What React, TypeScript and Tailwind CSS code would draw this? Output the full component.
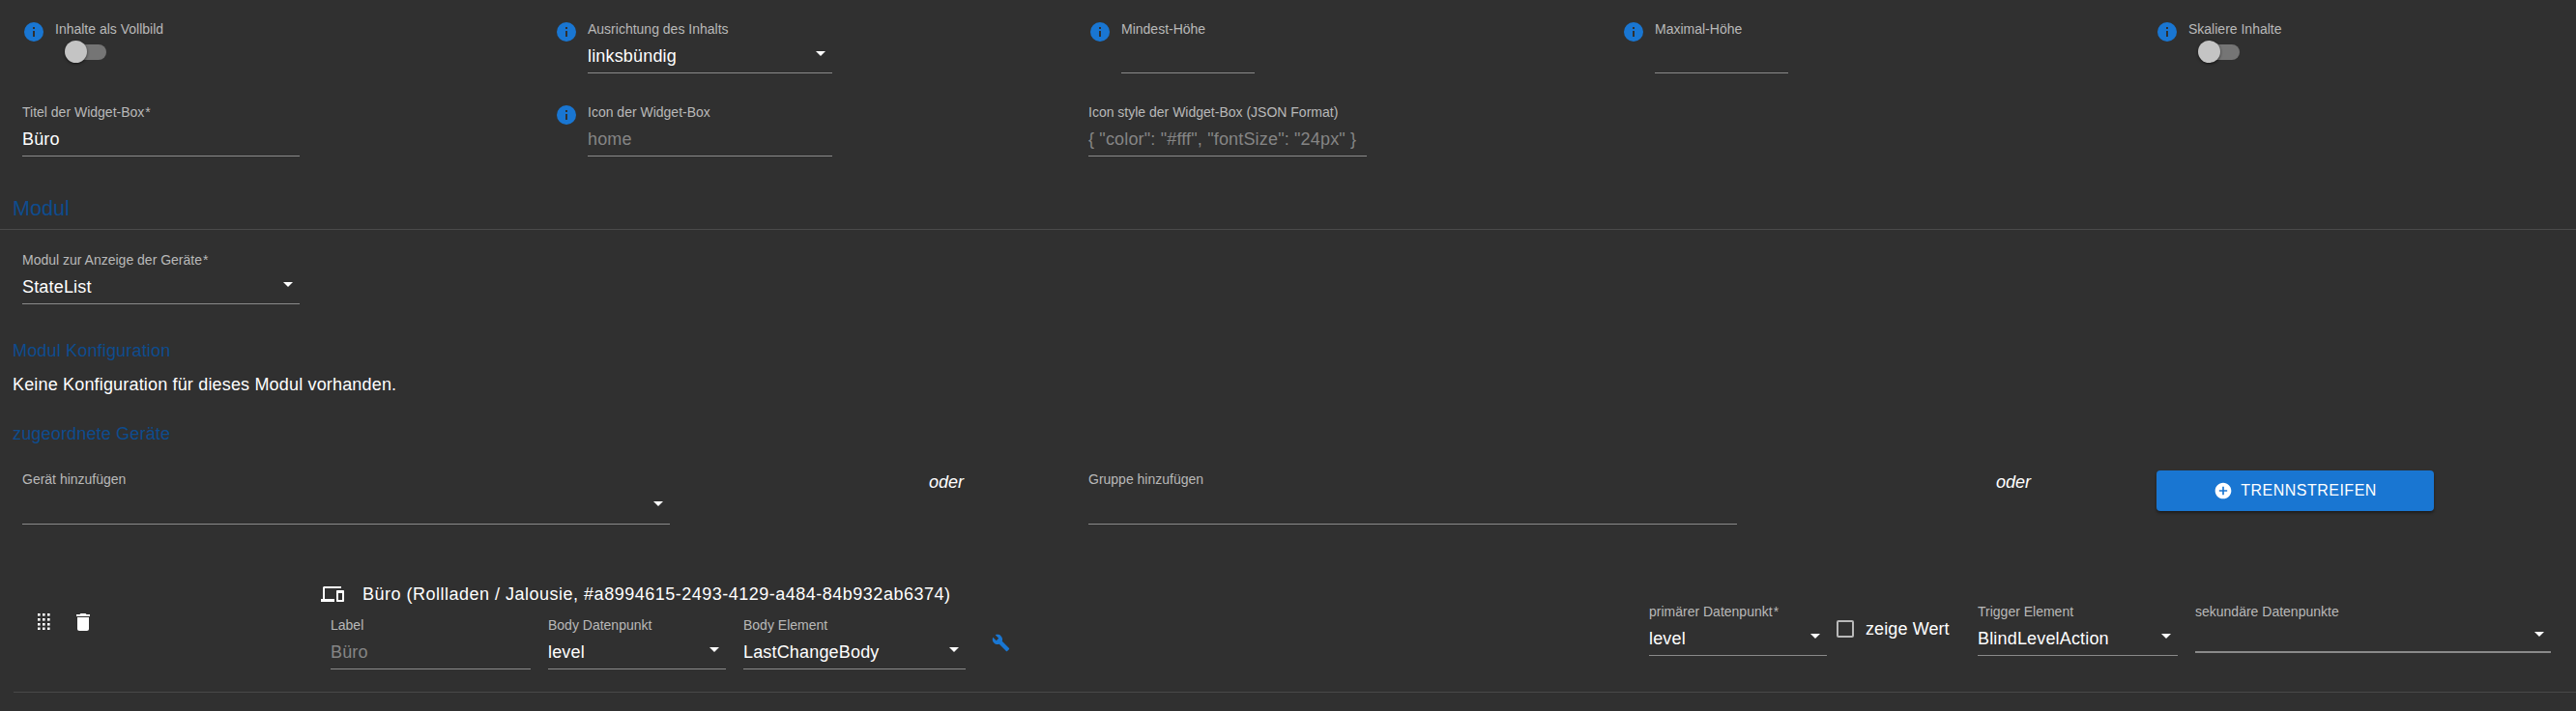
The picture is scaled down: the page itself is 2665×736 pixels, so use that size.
const FONT = "font-['Liberation_Sans',Arial,sans-serif]"

function InfoIcon() {
  return (
    <svg width="20" height="20" viewBox="0 0 20 20" className="shrink-0">
      <circle cx="10" cy="10" r="10" fill="#1976d2" />
      <rect x="9" y="9" width="2" height="6" fill="#303030" />
      <rect x="9" y="5" width="2" height="2" fill="#303030" />
    </svg>
  )
}

function Arrow() {
  return (
    <svg width="10" height="5" viewBox="0 0 10 5" className="absolute right-[7px] top-[7px]">
      <path d="M0 0l5 5 5-5z" fill="#fff" />
    </svg>
  )
}

function Field({ label, value, placeholder, select, req, className = '' }: { label: string; value?: string; placeholder?: string; select?: boolean; req?: boolean; className?: string }) {
  return (
    <div className={`shrink-0 ${className}`}>
      <div className="h-[14px] text-[14px] leading-[14px] text-[#b9b9b9] whitespace-nowrap">
        {label}{req && <span className="ml-[1px]">*</span>}
      </div>
      <div className="relative mt-[9px] h-[24px] text-[18px] leading-[24px] tracking-[0.17px] whitespace-nowrap">
        {value && <span className="text-white">{value}</span>}
        {placeholder && <span className="text-[#858585]">{placeholder}</span>}
        {select && <Arrow />}
      </div>
      <div className="mt-[5px] h-[1px] bg-[#8a8a8a]" />
    </div>
  )
}

function Switch() {
  return (
    <div className="relative mt-[5px] ml-[10px] h-[23px] w-[43px]">
      <div className="absolute left-[8px] top-[4px] h-[16px] w-[35px] rounded-full bg-[#757575]" />
      <div className="absolute left-0 top-0 h-[23px] w-[23px] rounded-full bg-[#c4c4c4] shadow-[0_1px_3px_rgba(0,0,0,0.6)]" />
    </div>
  )
}

function InfoCell({ children }: { children: React.ReactNode }) {
  return (
    <div className="flex gap-[12px]">
      <InfoIcon />
      {children}
    </div>
  )
}

function SwitchField({ label }: { label: string }) {
  return (
    <div>
      <div className="h-[14px] text-[14px] leading-[14px] text-[#b9b9b9] whitespace-nowrap">{label}</div>
      <Switch />
    </div>
  )
}

function Heading({ children, className = '' }: { children: React.ReactNode; className?: string }) {
  return <div className={`pl-[13px] leading-[24px] text-[#0e4c8e] ${className}`}>{children}</div>
}

export default function App() {
  return (
    <div className={`${FONT} h-[736px] w-full overflow-hidden bg-[#303030] pt-[23px] text-white`}>
      {/* Widget-Box */}
      <div className="grid grid-cols-[551px_552px_552px_552px_1fr] pl-[25px]">
        <InfoCell><SwitchField label="Inhalte als Vollbild" /></InfoCell>
        <InfoCell><Field label="Ausrichtung des Inhalts" value="linksbündig" select className="w-[253px]" /></InfoCell>
        <InfoCell><Field label="Mindest-Höhe" className="w-[138px]" /></InfoCell>
        <InfoCell><Field label="Maximal-Höhe" className="w-[138px]" /></InfoCell>
        <InfoCell><SwitchField label="Skaliere Inhalte" /></InfoCell>
      </div>
      <div className="mt-[33px] grid grid-cols-[553px_550px_1fr] pl-[23px]">
        <Field label="Titel der Widget-Box" req value="Büro" className="w-[287px]" />
        <InfoCell><Field label="Icon der Widget-Box" placeholder="home" className="w-[253px]" /></InfoCell>
        <Field label="Icon style der Widget-Box (JSON Format)" placeholder='{ "color": "#fff", "fontSize": "24px" }' className="w-[288px]" />
      </div>

      {/* Modul */}
      <Heading className="mt-[42px] text-[21.6px]">Modul</Heading>
      <div className="mt-[9px] h-[1px] bg-[#4a4a4a]" />
      <div className="mt-[24px] pl-[23px]">
        <Field label="Modul zur Anzeige der Geräte" req value="StateList" select className="w-[287px]" />
      </div>
      <Heading className="mt-[36px] text-[18px] tracking-[0.17px]">Modul Konfiguration</Heading>
      <div className="mt-[11px] pl-[13px] text-[18px] leading-[24px] tracking-[0.17px]">Keine Konfiguration für dieses Modul vorhanden.</div>
      <Heading className="mt-[27px] text-[18px] tracking-[0.17px]">zugeordnete Geräte</Heading>

      {/* Geräte hinzufügen */}
      <div className="mt-[28px] flex pl-[23px]">
        <Field label="Gerät hinzufügen" select className="w-[670px] [&>div:nth-child(3)]:mt-[6px]" />
        <div className="ml-[268px] mt-[1px] w-[165px] text-[18px] italic leading-[18px]">oder</div>
        <Field label="Gruppe hinzufügen" className="w-[671px] [&>div:nth-child(3)]:mt-[6px]" />
        <div className="ml-[268px] mt-[1px] w-[166px] text-[18px] italic leading-[18px]">oder</div>
        <button className="-mt-[2px] flex h-[42px] w-[287px] items-center justify-center gap-[8px] rounded-[4px] bg-[#1976d2] text-[16px] tracking-[0.5px] text-white shadow-[0_2px_3px_rgba(0,0,0,0.4)]">
          <svg width="20" height="20" viewBox="0 0 24 24" fill="#fff">
            <path d="M12 2C6.48 2 2 6.48 2 12s4.48 10 10 10 10-4.48 10-10S17.52 2 12 2zm5 11h-4v4h-2v-4H7v-2h4V7h2v4h4v2z" />
          </svg>
          TRENNSTREIFEN
        </button>
      </div>

      {/* Gerät */}
      <div className="ml-[14px] mt-[56px] flex h-[118px] border-b border-[#484848]">
        <div className="mt-[36px] flex w-[318px] items-start pl-[25px]">
          <svg width="13" height="17" viewBox="0 0 13 17" fill="#fff">
            {[0, 5, 10].map(x => [0, 5, 10, 14.5].map(y => <rect key={`${x}-${y}`} x={x} y={y} width="2.6" height="2.6" />))}
          </svg>
          <svg width="14" height="18" viewBox="0 0 14 18" fill="#fff" className="ml-[27px]">
            <path d="M1 16c0 1.1.9 2 2 2h8c1.1 0 2-.9 2-2V4H1v12zM14 1h-3.500l-1-1h-5l-1 1H0v2h14V1z" />
          </svg>
        </div>
        <div className="w-[1374px] shrink-0">
          <div className="flex h-[32px] items-center">
            <svg width="24" height="16" viewBox="0 0 24 16" fill="#fff">
              <path d="M4 2h17V0H3.500C2.700 0 2 .7 2 1.500V13H0v3h14v-3H4z" />
              <path fillRule="evenodd" d="M17 4h6c.6 0 1 .4 1 1v10c0 .6-.4 1-1 1h-6c-.6 0-1-.4-1-1V5c0-.6.4-1 1-1zm1 3v7h4V7z" />
            </svg>
            <span className="ml-[19px] text-[18px] leading-[24px] tracking-[0.5px]">Büro (Rollladen / Jalousie, #a8994615-2493-4129-a484-84b932ab6374)</span>
          </div>
          <div className="ml-[10px] mt-[9px] flex">
            <Field label="Label" placeholder="Büro" className="w-[207px]" />
            <Field label="Body Datenpunkt" value="level" select className="ml-[18px] w-[184px]" />
            <Field label="Body Element" value="LastChangeBody" select className="ml-[18px] w-[230px]" />
            <svg width="19" height="19" viewBox="0 0 24 24" fill="#1976d2" className="ml-[27px] mt-[16px]">
              <path d="M22.700 19l-9.100-9.100c.9-2.300.4-5-1.500-6.900-2-2-5-2.400-7.400-1.300L9 6 6 9 1.600 4.700C.4 7.100.9 10.100 2.900 12.100c1.900 1.900 4.600 2.400 6.900 1.500l9.100 9.100c.4.400 1 .4 1.400 0l2.300-2.300c.5-.4.500-1.100.1-1.400z" />
            </svg>
          </div>
        </div>
        <div className="mt-[27px] flex">
          <Field label="primärer Datenpunkt" req value="level" select className="w-[184px]" />
          <div className="ml-[10px] mt-[16px] flex h-[18px] w-[118px] shrink-0 items-center">
            <div className="h-[18px] w-[18px] shrink-0 rounded-[2px] border-2 border-[#b9b9b9]" />
            <span className="ml-[12px] whitespace-nowrap text-[18px] leading-[18px] tracking-[0.1px]">zeige Wert</span>
          </div>
          <Field label="Trigger Element" value="BlindLevelAction" select className="ml-[28px] w-[207px]" />
          <Field label="sekundäre Datenpunkte" select className="ml-[18px] w-[368px] [&>div:nth-child(2)]:mt-[7px] [&>div:nth-child(3)]:mt-[3px] [&>div:nth-child(3)]:h-[2px]" />
        </div>
      </div>
    </div>
  )
}
